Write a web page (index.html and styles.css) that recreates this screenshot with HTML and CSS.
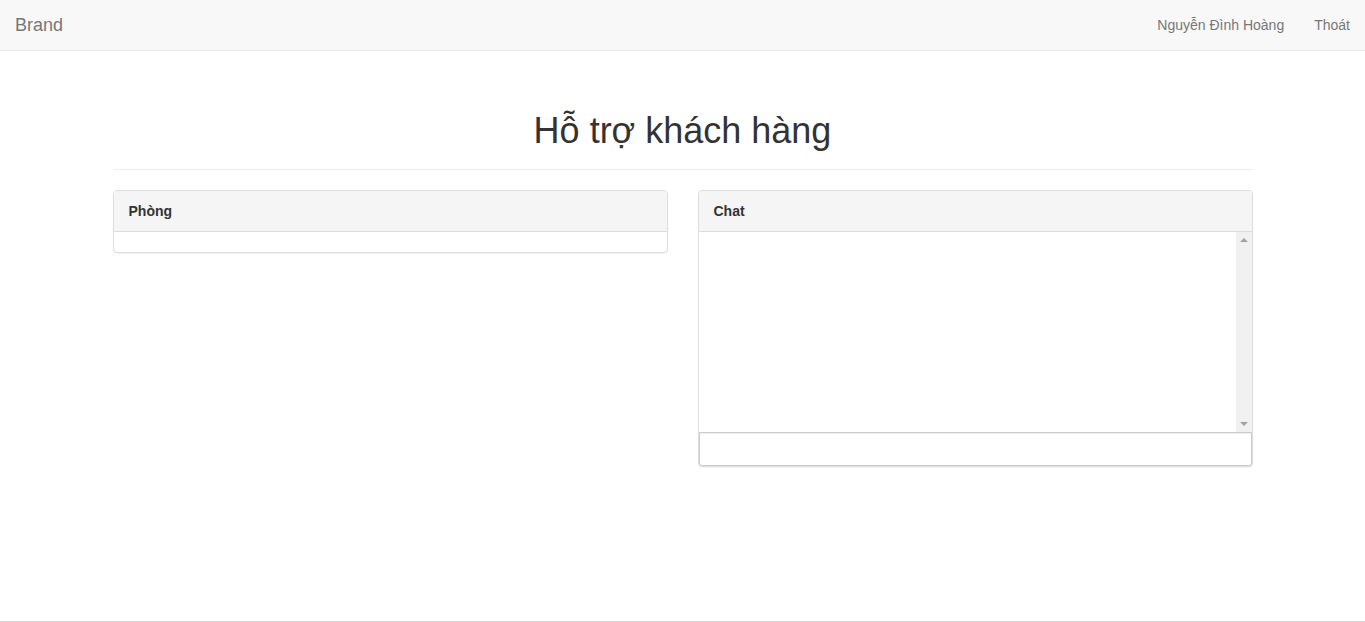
FILE: index.html
```html
<!DOCTYPE html>
<html lang="vi">
<head>
<meta charset="utf-8">
<title>Hỗ trợ khách hàng</title>
<link rel="stylesheet" href="styles.css">
</head>
<body>
<div class="page">
  <nav class="navbar">
    <a class="brand" href="#">Brand</a>
    <ul class="nav-right">
      <li><a href="#">Nguyễn Đình Hoàng</a></li>
      <li><a href="#">Thoát</a></li>
    </ul>
  </nav>
  <main class="container">
    <div class="page-header">
      <h1>Hỗ trợ khách hàng</h1>
    </div>
    <div class="row">
      <div class="col">
        <div class="panel">
          <div class="panel-heading">Phòng</div>
          <div class="panel-body rooms"></div>
        </div>
      </div>
      <div class="col">
        <div class="panel">
          <div class="panel-heading">Chat</div>
          <div class="chat-body">
            <div class="messages"></div>
            <div class="scrollbar">
              <span class="arrow up"></span>
              <span class="arrow down"></span>
            </div>
          </div>
          <input class="chat-input" type="text">
        </div>
      </div>
    </div>
  </main>
</div>
<footer class="footer"></footer>
</body>
</html>
```
FILE: styles.css
```css
* { box-sizing: border-box; }
html, body { margin: 0; padding: 0; }
body {
  font-family: "Liberation Sans", Arial, sans-serif;
  font-size: 14px;
  line-height: 1.42857;
  color: #333;
  background: #fff;
}
.page {
  min-height: 621px;
}
.navbar {
  height: 51px;
  background: #f8f8f8;
  border-bottom: 1px solid #e7e7e7;
  display: flex;
  justify-content: space-between;
  align-items: stretch;
  padding: 0 0 0 15px;
}
.brand {
  font-size: 18px;
  line-height: 20px;
  padding: 15px 0;
  color: #777;
  text-decoration: none;
}
.nav-right {
  list-style: none;
  margin: 0;
  padding: 0;
  display: flex;
}
.nav-right a {
  display: block;
  padding: 15px;
  line-height: 20px;
  color: #777;
  text-decoration: none;
}
.container {
  width: 1170px;
  margin: 0 auto;
  padding: 20px 15px 0;
}
.page-header {
  margin: 40px 0 20px;
  padding-bottom: 8px;
  border-bottom: 1px solid #eee;
}
.page-header h1 {
  margin: 0 0 10px;
  font-size: 36px;
  font-weight: 500;
  line-height: 1.1;
  text-align: center;
  color: #333;
}
.row {
  display: flex;
  margin: 0 -15px;
}
.col {
  width: 50%;
  padding: 0 15px;
}
.panel {
  border: 1px solid #ddd;
  border-radius: 4px;
  background: #fff;
  box-shadow: 0 1px 1px rgba(0,0,0,.05);
  margin-bottom: 20px;
}
.panel-heading {
  padding: 10px 15px;
  background: #f5f5f5;
  border-bottom: 1px solid #ddd;
  border-radius: 3px 3px 0 0;
  font-weight: bold;
  line-height: 20px;
  color: #333;
}
.rooms {
  height: 20px;
}
.chat-body {
  display: flex;
  height: 200px;
}
.messages {
  flex: 1;
}
.scrollbar {
  width: 16px;
  background: #f1f1f1;
  display: flex;
  flex-direction: column;
  justify-content: space-between;
  align-items: center;
  padding: 6px 0;
}
.arrow {
  width: 0;
  height: 0;
  border-left: 4px solid transparent;
  border-right: 4px solid transparent;
}
.arrow.up { border-bottom: 4px solid #a3a3a3; }
.arrow.down { border-top: 4px solid #a3a3a3; }
.chat-input {
  display: block;
  width: 100%;
  height: 34px;
  margin: 0;
  border: 1px solid #ccc;
  border-radius: 0 0 3px 3px;
  box-shadow: inset 0 1px 1px rgba(0,0,0,.075);
  font-family: inherit;
  font-size: 14px;
  padding: 6px 12px;
}
.footer {
  height: 1px;
  border-top: 1px solid #d4d4d4;
}
```
